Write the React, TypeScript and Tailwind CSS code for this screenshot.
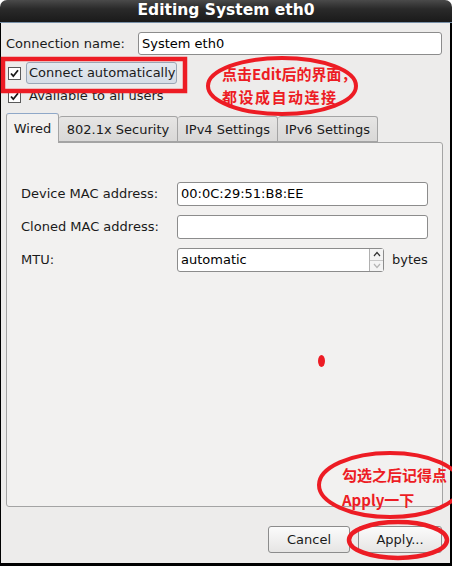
import React from "react";

const F = { fontFamily: '"DejaVu Sans", "Liberation Sans", sans-serif' };
const CJK = { fontFamily: '"Noto Sans CJK SC", "Noto Sans", sans-serif' };

function Check() {
  return (
    <svg width="13" height="13" viewBox="0 0 13 13" className="shrink-0">
      <rect x="0.5" y="0.5" width="12" height="12" fill="#ffffff" stroke="#5a5a5a" />
      <path d="M3 6.5 L5.3 9.2 L10 3.2" fill="none" stroke="#1a1a1a" strokeWidth="1.8" />
    </svg>
  );
}

function Field({ value, w }: { value?: string; w: string }) {
  return (
    <div className={`h-[24px] ${w} bg-white border border-[#8c8c8c] rounded-[3px] flex items-center pl-[3px] text-[13px] text-black`} style={F}>
      {value}
    </div>
  );
}

export default function App() {
  return (
    <div className="relative w-[452px] h-[566px] bg-white overflow-hidden" style={F}>
      <div className="flex flex-col h-full">
        {/* Title bar */}
        <div className="h-[23px] shrink-0 rounded-t-[7px] bg-[linear-gradient(#4a4a4a,#2a2a2a_40%,#1a1a1a)] border-b border-[#7890a8] flex items-center justify-center">
          <span className="text-white font-bold text-[15.5px] leading-none" style={F}>Editing System eth0</span>
        </div>
        {/* Body */}
        <div className="flex-1 flex flex-col bg-[#edeceb] border-l border-black border-r-2 border-r-black text-[13px] text-[#1a1a1a]">
          <div className="mt-[9px] h-[23px] flex items-center pl-[5px] pr-[8px]">
            <span>Connection name:</span>
            <div className="ml-auto h-[23px] w-[304px] bg-white border border-[#8c8c8c] rounded-[3px] flex items-center pl-[3px] text-[13px] text-black">System eth0</div>
          </div>
          <div className="mt-[7px] h-[22px] flex items-center pl-[7px]">
            <Check />
            <div className="ml-[5px] h-[22px] w-[151px] rounded-[3px] border border-[#9aa6b6] bg-[linear-gradient(#e4e9ef,#d6dde6)] flex items-center pl-[2px]">
              Connect automatically
            </div>
          </div>
          <div className="mt-[3px] h-[18px] flex items-center pl-[7px]">
            <Check />
            <span className="ml-[8px]">Available to all users</span>
          </div>
          {/* Tabs */}
          <div className="mt-[8px] h-[29px] flex items-end pl-[5px] relative z-10">
            <div className="h-[30px] -mb-[1px] w-[53px] bg-[#f2f1f0] border border-[#a4a4a4] border-b-0 border-t-[#8fa8c8] rounded-t-[3px] flex items-center justify-center pt-[1px]">
              Wired
            </div>
            <div className="h-[26px] w-[119px] bg-[linear-gradient(#e6e5e4,#d9d8d7)] border border-[#a4a4a4] border-l-0 rounded-t-[3px] flex items-center justify-center pt-[1px]">
              802.1x Security
            </div>
            <div className="h-[26px] w-[100px] bg-[linear-gradient(#e6e5e4,#d9d8d7)] border border-[#a4a4a4] border-l-0 rounded-t-[3px] flex items-center justify-center pt-[1px]">
              IPv4 Settings
            </div>
            <div className="h-[26px] w-[100px] bg-[linear-gradient(#e6e5e4,#d9d8d7)] border border-[#a4a4a4] border-l-0 rounded-t-[3px] flex items-center justify-center pt-[1px]">
              IPv6 Settings
            </div>
          </div>
          {/* Panel */}
          <div className="ml-[5px] w-[437px] h-[365px] bg-[#f2f1f0] border border-[#a4a4a4] rounded-[3px] rounded-tl-none flex flex-col pl-[14px]">
            <div className="mt-[39px] h-[24px] flex items-center">
              <span className="w-[156px]">Device MAC address:</span>
              <Field value="00:0C:29:51:B8:EE" w="w-[251px]" />
            </div>
            <div className="mt-[9px] h-[24px] flex items-center">
              <span className="w-[156px]">Cloned MAC address:</span>
              <Field w="w-[251px]" />
            </div>
            <div className="mt-[9px] h-[24px] flex items-center">
              <span className="w-[156px]">MTU:</span>
              <div className="h-[24px] w-[207px] bg-white border border-[#8c8c8c] rounded-[3px] flex items-center text-black">
                <span className="pl-[3px] flex-1">automatic</span>
                <div className="w-[14px] h-full border-l border-[#b0b0b0] flex flex-col bg-[#f4f4f4]">
                  <div className="flex-1 flex items-center justify-center border-b border-[#c8c8c8]">
                    <svg width="8" height="6" viewBox="0 0 8 6"><path d="M1 5 L4 1.5 L7 5" fill="none" stroke="#333" strokeWidth="1.2" /></svg>
                  </div>
                  <div className="flex-1 flex items-center justify-center">
                    <svg width="8" height="6" viewBox="0 0 8 6"><path d="M1 1 L4 4.5 L7 1" fill="none" stroke="#b5b5b5" strokeWidth="1.2" /></svg>
                  </div>
                </div>
              </div>
              <span className="ml-[8px]">bytes</span>
            </div>
          </div>
          {/* Buttons */}
          <div className="mt-[19px] h-[27px] flex justify-end gap-[8px] pr-[8px]">
            <div className="w-[82px] h-[27px] rounded-[3px] border border-[#8c8c8c] bg-[linear-gradient(#fbfbfb,#e6e5e4)] flex items-center justify-center">Cancel</div>
            <div className="w-[84px] h-[27px] rounded-[3px] border border-[#8c8c8c] bg-[linear-gradient(#fbfbfb,#e6e5e4)] flex items-center justify-center">Apply...</div>
          </div>
        </div>
        <div className="h-[3px] bg-black shrink-0" />
      </div>

      {/* Red annotations */}
      <svg className="absolute inset-0 pointer-events-none" width="452" height="566" viewBox="0 0 452 566">
        <rect x="3" y="59" width="182" height="32" fill="none" stroke="#ed1c24" strokeWidth="4.5" />
        <ellipse cx="282" cy="86" rx="74" ry="28" fill="none" stroke="#ed1c24" strokeWidth="4" />
        <ellipse cx="321.5" cy="361" rx="3.5" ry="6" fill="#ed1c24" />
        <ellipse cx="390" cy="485" rx="71" ry="32" fill="none" stroke="#ed1c24" strokeWidth="4" />
        <ellipse cx="398" cy="540" rx="49" ry="18" fill="none" stroke="#ed1c24" strokeWidth="4.5" />
      </svg>
      <div className="absolute left-[222px] top-[62px] text-[15px] font-bold text-[#ed1c24] leading-[23px] whitespace-nowrap" style={CJK}>
        <div>点击Edit后的界面，</div>
        <div className="tracking-[1.5px]">都设成自动连接</div>
      </div>
      <div className="absolute left-[342px] top-[462px] text-[15px] font-bold text-[#ed1c24] leading-[25px] whitespace-nowrap" style={CJK}>
        <div>勾选之后记得点</div>
        <div>Apply一下</div>
      </div>
    </div>
  );
}
